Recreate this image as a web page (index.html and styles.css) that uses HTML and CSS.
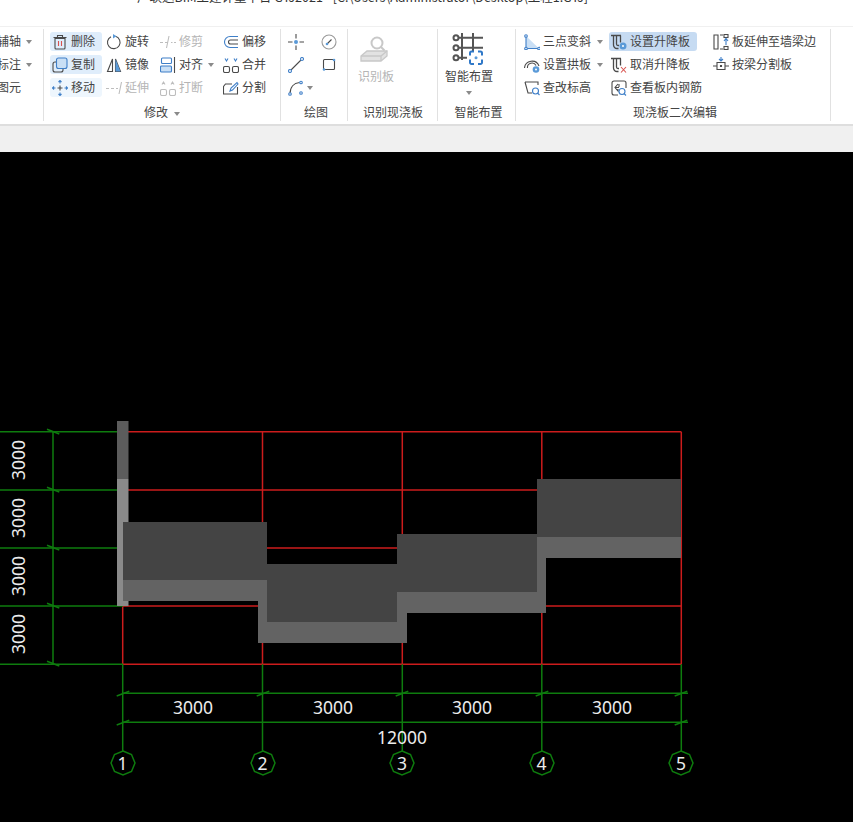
FILE: index.html
```html
<!DOCTYPE html>
<html lang="zh-CN">
<head>
<meta charset="utf-8">
<title>广联达BIM土建计量平台</title>
<link rel="stylesheet" href="styles.css">
</head>
<body>
<div class="app">
  <header class="titlebar"><div class="title">广联达BIM土建计量平台 GTJ2021 - [C:\Users\Administrator\Desktop\工程1.GTJ]</div></header>
  <section class="ribbon">
    <div class="group g1">
      <div class="body">
        <div class="item"><span>辅轴</span><i class="caret"></i></div>
        <div class="item"><span>标注</span><i class="caret"></i></div>
        <div class="item"><span>图元</span><i class="caret hidden"></i></div>
      </div>
    </div>
    <div class="group g2">
      <div class="body">
        <div class="item hl"><svg class="ic" viewBox="0 0 16 16"><path class="s-d" d="M3 4.500h10v9.500a1 1 0 0 1-1 1H4a1 1 0 0 1-1-1zM1.500 3.500h13M5.500 3.500V1.500h5v2"/><path class="s-r" d="M6.500 7v5M9.500 7v5"/></svg><span>删除</span></div>
        <div class="item"><svg class="ic" viewBox="0 0 16 16"><path class="s-d" d="M9.500 2.300A6.300 6.300 0 1 1 5 2.700"/><path class="f-b" d="M7 0l3.500 2.200L7 4.500z"/></svg><span>旋转</span></div>
        <div class="item off"><svg class="ic" viewBox="0 0 16 16"><path class="s-g" d="M0 8.500h3M5 8.500h3M11 8.500h1.500M14 8.500h2M9 2L6.500 14"/></svg><span>修剪</span></div>
        <div class="item"><svg class="ic" viewBox="0 0 16 16"><path class="s-b" d="M15 2.500H7a5.500 5.500 0 0 0 0 11h8"/><path class="s-d" d="M15 6H7.500a2 2 0 0 0 0 4H15"/></svg><span>偏移</span></div>

        <div class="item hl"><svg class="ic" viewBox="0 0 16 16"><rect class="s-d" x="1" y="5" width="10" height="10" rx="2"/><rect class="s-b f-l" x="4.500" y="1" width="10.500" height="10.500" rx="2"/></svg><span>复制</span></div>
        <div class="item"><svg class="ic" viewBox="0 0 16 16"><path class="s-d" d="M6.500 2L1.500 14.500h5zM9.500 2l5 12.500h-5z"/><path class="f-b" d="M9.500 2l5 12.500h-5z"/></svg><span>镜像</span></div>
        <div class="item align"><svg class="ic wide" viewBox="0 0 16 16"><rect class="s-b" x="1.500" y="1" width="10" height="5.500" rx="1"/><rect class="s-b f-l" x="0.500" y="9" width="11" height="6" rx="1"/><path class="s-d" d="M14.500 0v16"/></svg><span>对齐</span><i class="caret"></i></div>
        <div class="item"><svg class="ic" viewBox="0 0 16 16"><rect class="s-d" x="0.500" y="9.500" width="6" height="6" rx="1.500"/><rect class="s-d" x="9.500" y="9.500" width="6" height="6" rx="1.500"/><path class="s-b" d="M2 1.500l1.500 2.500L5 1.500M11 1.500l1.500 2.500 1.500-2.500"/></svg><span>合并</span></div>

        <div class="item hl soft"><svg class="ic" viewBox="0 0 16 16"><path class="s-d" d="M5.500 8h5M8 5.500v5"/><path class="s-b" d="M8 0v3.500M6.500 2L8 .5 9.500 2M8 12.500V16M6.500 14L8 15.500 9.500 14M0 8h3.500M2 6.500L.5 8 2 9.500M12.500 8H16M14 6.500L15.500 8 14 9.500"/></svg><span>移动</span></div>
        <div class="item off"><svg class="ic" viewBox="0 0 16 16"><path class="s-g" d="M0 8.500h3M5 8.500h3M10 8.500h2M15.500 2L13 14"/></svg><span>延伸</span></div>
        <div class="item off"><svg class="ic" viewBox="0 0 16 16"><rect class="s-g" x="0.500" y="9.500" width="6" height="6" rx="1.500"/><rect class="s-g" x="9.500" y="9.500" width="6" height="6" rx="1.500"/><path class="s-g" d="M2 4.500l1.500-2.500L5 4.500M11 4.500l1.500-2.500 1.500 2.500"/></svg><span>打断</span></div>
        <div class="item"><svg class="ic" viewBox="0 0 16 16"><path class="s-d" d="M9 4H2.500L.5 6.500v7.500h14V7"/><path class="s-b" d="M7 11l1-3 6-5.500 1 1.500-5.500 6z"/></svg><span>分割</span></div>
      </div>
      <div class="label">修改<i class="caret"></i></div>
    </div>
    <div class="group g3">
      <div class="body">
        <div class="cell"><svg class="ic" viewBox="0 0 16 16"><path class="s-d" d="M0 8h4.500M11.500 8H16M8 0v4.500M8 11.500V16"/><circle class="f-b" cx="8" cy="8" r="2"/></svg></div>
        <div class="cell"><svg class="ic" viewBox="0 0 16 16"><circle class="s-g2" cx="8" cy="8" r="7"/><path class="s-d" d="M6 10l4.500-4.500"/><circle class="f-b" cx="6" cy="10" r="1.300"/></svg></div>
        <div class="cell"><svg class="ic" viewBox="0 0 16 16"><path class="s-d" d="M2 14L14 2"/><circle class="c-b" cx="2" cy="14" r="1.500"/><circle class="c-b" cx="14" cy="2" r="1.500"/></svg></div>
        <div class="cell"><svg class="ic" viewBox="0 0 16 16"><rect class="s-d" x="2.500" y="2.500" width="11" height="10" rx="1"/><circle class="f-b" cx="3" cy="12.500" r="1.300"/><circle class="f-b" cx="13" cy="3" r="1.300"/></svg></div>
        <div class="cell"><svg class="ic" viewBox="0 0 16 16"><path class="s-d" d="M2 14C2 7 6 3 11.500 2.500"/><circle class="c-b" cx="2" cy="14" r="1.300"/><circle class="c-b" cx="13" cy="2.500" r="1.300"/><circle class="c-b" cx="13" cy="13" r="1.300"/></svg><i class="caret"></i></div>
      </div>
      <div class="label">绘图</div>
    </div>
    <div class="group g4">
      <div class="body big off">
        <svg class="ic-big" viewBox="0 0 28 28"><circle class="s-g2" cx="17" cy="8" r="5.500"/><path class="s-g2" d="M21 12l3.500 3.500"/><path class="f-g s-g3" d="M1 21l6-5h20v5l-6 5H1z"/><path class="s-g3" d="M1 21h20l6-5M21 21v5"/></svg>
        <span>识别板</span>
      </div>
      <div class="label">识别现浇板</div>
    </div>
    <div class="group g5">
      <div class="body big">
        <svg class="ic-huge" viewBox="0 0 32 32"><path class="s-k" d="M10 0v27M21 0v18M6.500 4.700H31M6.500 14.700H31M6.500 24.700H15"/><circle class="s-k" cx="4" cy="4.700" r="2.500"/><circle class="s-k" cx="4" cy="14.700" r="2.500"/><circle class="s-k" cx="4" cy="24.700" r="2.500"/><path class="s-bb" d="M18 22.500V20a1.500 1.500 0 0 1 1.500-1.500H22M26 18.500h2.500A1.500 1.500 0 0 1 30 20v2.500M30 26.500v3a1.500 1.500 0 0 1-1.500 1.500H26M22 31h-2.500a1.500 1.500 0 0 1-1.500-1.500v-3"/><circle class="f-b" cx="24" cy="24.700" r="1.500"/></svg>
        <span>智能布置</span>
        <i class="caret"></i>
      </div>
      <div class="label">智能布置</div>
    </div>
    <div class="group g6">
      <div class="body">
        <div class="item"><svg class="ic" viewBox="0 0 16 16"><path class="f-l" d="M2 2l13 12.500H2z"/><path class="s-b" d="M2 2v12.500h13"/><circle class="c-b" cx="2" cy="2" r="1.300"/><circle class="c-b" cx="2" cy="14.500" r="1.300"/><circle class="c-b" cx="15" cy="14.500" r="1.300"/></svg><span>三点变斜</span><i class="caret"></i></div>
        <div class="item hl strong"><svg class="ic" viewBox="0 0 16 16"><path class="s-u" d="M0 1.500h10M2.500 1.500v9.500a3.500 3.500 0 0 0 3.500 3.500h1.500M5.500 1.500v8.500a1.500 1.500 0 0 0 1.500 1.500h1M9.500 1.500v7"/><circle class="f-b" cx="12" cy="12" r="3.500"/><circle class="c-w" cx="12" cy="12" r="1"/></svg><span>设置升降板</span></div>
        <div class="item"><svg class="ic" viewBox="0 0 16 16"><path class="s-d" d="M1 1h4v14H1zM7 1h3M7 15h3"/><rect class="s-d" x="11" y="0.500" width="4" height="3"/><rect class="s-d" x="11" y="12.500" width="4" height="3"/><path class="s-b" d="M13 11V5M11 7l2-2.500L15 7"/></svg><span>板延伸至墙梁边</span></div>

        <div class="item"><svg class="ic" viewBox="0 0 16 16"><path class="s-d" d="M.5 11a7.500 7.500 0 0 1 14.500-2M3.500 11a4.500 4.500 0 0 1 8.500-2.500"/><circle class="f-b" cx="12" cy="12.500" r="3.300"/><circle class="c-w" cx="12" cy="12.500" r="1"/></svg><span>设置拱板</span><i class="caret"></i></div>
        <div class="item"><svg class="ic" viewBox="0 0 16 16"><path class="s-u" d="M0 1.500h10M2.500 1.500v9.500a3.500 3.500 0 0 0 3.500 3.500h1.500M5.500 1.500v8.500a1.500 1.500 0 0 0 1.500 1.500h1M9.500 1.500v7"/><path class="s-r" d="M10 10l5 5.500M15 10l-5 5.500"/></svg><span>取消升降板</span></div>
        <div class="item"><svg class="ic" viewBox="0 0 16 16"><path class="s-d" d="M0 9h3.500M12.500 9H16M4 5.500h8v7H4zM7.500 8v2M8.500 8v2"/><path class="s-b" d="M8 0v4M6 2l2 2 2-2"/></svg><span>按梁分割板</span></div>

        <div class="item"><svg class="ic" viewBox="0 0 16 16"><path class="s-d" d="M1 2h13v3M1 2l3 11h4"/><circle class="s-b" cx="11.500" cy="11" r="3"/><path class="s-b" d="M13.500 13l2 2"/></svg><span>查改标高</span></div>
        <div class="item"><svg class="ic" viewBox="0 0 16 16"><path class="s-d" d="M7 15H3a2 2 0 0 1-2-2V3a2 2 0 0 1 2-2h10a2 2 0 0 1 2 2v5M4 7.500h4M7 4l-3 3.500L7 11v-2M8 4v3"/><circle class="s-b" cx="11" cy="11.500" r="3"/><path class="s-b" d="M13 13.500l2 2"/></svg><span>查看板内钢筋</span></div>
      </div>
      <div class="label">现浇板二次编辑</div>
    </div>
  </section>
  <div class="strip"></div>
  <main class="canvas">
    <svg class="drawing" viewBox="0 152 853 670">
      <g class="red">
        <path d="M128 431.700H681.300M128 490H681.300M123 548H681.300M123 606H681.300M122.700 664.300H681.300"/>
        <path d="M122.700 606V664.300M262.500 431.700V664.300M402.300 431.700V664.300M541.800 431.700V664.300M681.300 431.700V664.300"/>
      </g>
      <g class="green">
        <path d="M0 431.700H117M0 490H117M0 548H117M0 606H123M0 664.300H123M53 431.700V664.300"/>
        <path d="M47 429.300L59.300 434M47 487.300L59.300 492M47 545.300L59.300 550M47 603.300L59.300 608M47 661.300L59.300 666"/>
        <path d="M122.700 664.300V751M262.500 664.300V751M402.300 664.300V751M541.800 664.300V751M681.300 664.300V751"/>
        <path d="M122.700 693.300H688M122.700 722.300H688"/>
        <path d="M116.700 696L129.300 691.300M256.700 696L269.300 691.300M395.700 696L408.300 691.300M535.700 696L548.300 691.300M674.700 696L687.300 691.300M116.700 725L129.300 720.300M674.700 725L687.300 720.300"/>
        <polygon points="123,751 131.500,754.500 135,763 131.500,771.500 123,775 114.500,771.500 111,763 114.500,754.500"/>
        <polygon points="263,751 271.500,754.500 275,763 271.500,771.500 263,775 254.500,771.500 251,763 254.500,754.500"/>
        <polygon points="402,751 410.500,754.500 414,763 410.500,771.500 402,775 393.500,771.500 390,763 393.500,754.500"/>
        <polygon points="542,751 550.500,754.500 554,763 550.500,771.500 542,775 533.500,771.500 530,763 533.500,754.500"/>
        <polygon points="681,751 689.500,754.500 693,763 689.500,771.500 681,775 672.500,771.500 669,763 672.500,754.500"/>
      </g>
      <rect class="col-top" x="117" y="421" width="11.500" height="58"/>
      <rect class="col-low" x="117" y="479" width="11.500" height="127"/>
      <g class="slab-light">
        <path d="M123 580H267V622H397V592H537V537H681V558H546V613H407V643H258V601H123z"/>
      </g>
      <g class="slab-dark">
        <rect x="123" y="522" width="144" height="58"/>
        <rect x="267" y="564" width="130" height="58"/>
        <rect x="397" y="534" width="140" height="58"/>
        <rect x="537" y="479" width="144" height="58"/>
      </g>
      <g class="dim">
        <text x="193" y="714">3000</text>
        <text x="333" y="714">3000</text>
        <text x="472" y="714">3000</text>
        <text x="612" y="714">3000</text>
        <text x="402" y="744">12000</text>
        <text x="122.500" y="770">1</text>
        <text x="262.500" y="770">2</text>
        <text x="402" y="770">3</text>
        <text x="541.500" y="770">4</text>
        <text x="681" y="770">5</text>
        <text transform="translate(25 460) rotate(-90)">3000</text>
        <text transform="translate(25 518) rotate(-90)">3000</text>
        <text transform="translate(25 576) rotate(-90)">3000</text>
        <text transform="translate(25 634) rotate(-90)">3000</text>
      </g>
    </svg>
  </main>
</div>
</body>
</html>
```

FILE: styles.css
```css
* { box-sizing: border-box; }
html, body { margin: 0; height: 100%; }
body { font-family: "Noto Sans CJK SC", "Noto Sans", sans-serif; background: #000; overflow: hidden; }

.app { width: 853px; height: 822px; display: flex; flex-direction: column; }

.titlebar { height: 26px; background: #fff; overflow: hidden; flex: none; padding-left: 137px; }
.title { margin-top: -11px; font-size: 12.5px; line-height: 16px; color: #333; white-space: nowrap; }

.ribbon { height: 100px; flex: none; display: flex; background: #fff; border-top: 1px solid #f0f0f0; border-bottom: 2px solid #dedede; padding-top: 2px; color: #444; font-size: 12px; }
.group { height: 92px; flex: none; border-right: 1px solid #e1e1e1; display: flex; flex-direction: column; }
.group .body { height: 74px; flex: none; padding-top: 3px; }
.label { height: 18px; line-height: 18px; text-align: center; white-space: nowrap; color: #444; }
.label .caret { margin-left: 6px; }
.g3 .label, .g5 .label, .g6 .label { padding-left: 4px; }
.g4 .label { padding-left: 1px; }

.g1 { width: 44px; overflow: hidden; }
.g1 .body { display: grid; grid-auto-rows: 19px; row-gap: 4px; justify-content: start; margin-left: -3px; }
.g2 { width: 237px; }
.g2 .body { display: grid; grid-template-columns: 54px 54px 63px 52px; grid-auto-rows: 19px; row-gap: 4px; padding-left: 6px; }
.g3 { width: 67px; }
.g3 .body { display: grid; grid-template-columns: 33px 33px; grid-auto-rows: 19px; row-gap: 4px; padding-left: 7px; }
.g4 { width: 90px; }
.g5 { width: 78px; }
.g6 { width: 315px; }
.g6 .body { display: grid; grid-template-columns: 87px 102px auto; grid-auto-rows: 19px; row-gap: 4px; padding-left: 6px; }

.item { display: flex; align-items: center; height: 19px; gap: 3px; padding: 0 7px 0 2px; white-space: nowrap; justify-self: start; border-radius: 3px; line-height: 19px; }
.item span { margin-bottom: 2px; }
.g1 .item { padding: 0; gap: 0; }
.item .caret { margin-left: 1.500px; }
.g1 .item .caret { margin-left: 5px; }
.g6 .item .caret { margin-left: 2.500px; }
.item.hl { background: #dfedfb; }
.item.hl.soft { background: #eef6fd; }
.item.hl.strong { background: #c6dbf2; }
.item.off, .big.off { color: #b5b5b5; }
.cell { display: flex; align-items: center; height: 19px; }
.cell .caret { margin-left: 2.500px; }

.ic { width: 16px; height: 16px; flex: none; display: block; }
.ic-big { width: 28px; height: 28px; display: block; margin: 3px 0 4px 2px; }
.ic-huge { width: 32px; height: 32px; display: block; margin: 1px 0 2px 7px; }

.caret { display: inline-block; width: 0; height: 0; border-left: 3.500px solid transparent; border-right: 3.500px solid transparent; border-top: 4px solid #8a8a8a; vertical-align: middle; flex: none; }
.caret.hidden { visibility: hidden; }

.big { display: flex; flex-direction: column; align-items: flex-start; line-height: 18px; }
.g4 .big { padding-left: 10px; }
.g5 .big { padding-left: 7px; }
.g5 .big .caret { margin: 6px 0 0 21px; }

svg path, svg rect, svg circle { fill: none; stroke-width: 1.100; }
svg .s-d { stroke: #4a4a4a; }
svg .s-u { stroke: #4a4a4a; stroke-width: 1.300; }
svg .s-k { stroke: #555; stroke-width: 2; }
svg .s-b { stroke: #3f7fc8; }
svg .s-bb { stroke: #2f78c8; stroke-width: 2; }
svg .s-r { stroke: #d9534f; }
svg .s-g { stroke: #bdbdbd; }
svg .s-g2 { stroke: #9a9a9a; }
.g4 svg .s-g2 { stroke: #c8c8c8; stroke-width: 2; }
svg .s-g3 { stroke: #c8c8c8; stroke-width: 1.300; }
svg .f-b { fill: #5a9ad8; stroke: none; }
svg .f-l { fill: #c9dff5; }
svg .f-g { fill: #e2e2e2; }
svg .c-b { fill: #fff; stroke: #3f7fc8; }
svg .c-w { fill: #fff; stroke: none; }

.strip { height: 26px; flex: none; background: #f0f0f0; }

.canvas { flex: 1; background: #000; min-height: 0; }
.drawing { display: block; width: 853px; height: 670px; }
.drawing path, .drawing polygon { fill: none; stroke-width: 1.500; }
.red path { stroke: #cc1c1c; }
.green path, .green polygon { stroke: #0e7c0e; }
.drawing .col-top { fill: #5c5c5c; stroke: none; }
.drawing .col-low { fill: #8a8a8a; stroke: none; }
.drawing .slab-light path { fill: #636363; stroke: none; }
.drawing .slab-dark rect { fill: #444; stroke: none; }
.dim text { fill: #ececec; font-family: "Noto Sans", sans-serif; font-size: 17.500px; text-anchor: middle; }
```
